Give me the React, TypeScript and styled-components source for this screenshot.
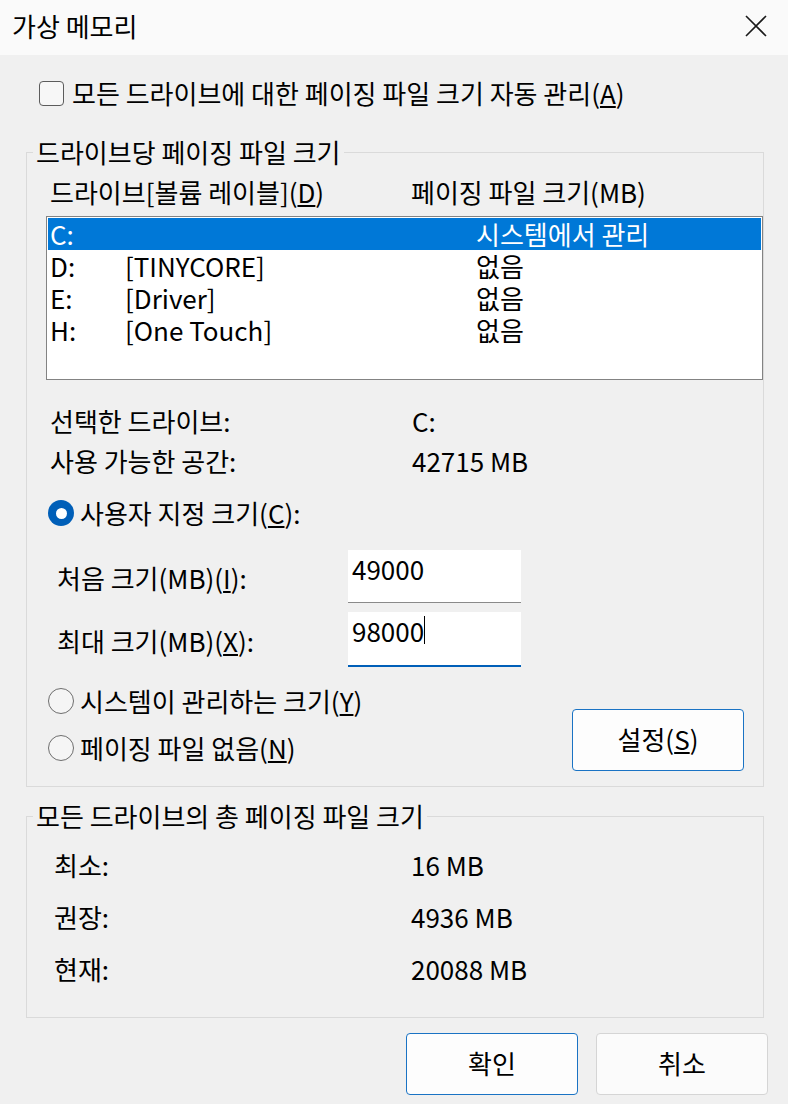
import React from 'react';
import styled, { createGlobalStyle } from 'styled-components';

const GlobalStyle = createGlobalStyle`
  *, *::before, *::after {
    box-sizing: border-box;
  }
  html, body {
    margin: 0;
    padding: 0;
    background: #f0f0f0;
  }
  body {
    font-family: "Noto Sans CJK KR", "Noto Sans", sans-serif;
    font-size: 26px;
    line-height: 30px;
    color: #000;
  }
`;

const Window = styled.div`
  width: 788px;
  height: 1104px;
  display: flex;
  flex-direction: column;
  background: #f0f0f0;
  overflow: hidden;
`;

const TitleBar = styled.header`
  height: 55px;
  flex: none;
  display: flex;
  align-items: center;
  justify-content: space-between;
  padding: 0 20px 3px 12px;
  background: #fafafa;
`;

const Title = styled.h1`
  margin: 0;
  font-size: 26px;
  font-weight: 400;
  line-height: 30px;
`;

const CloseButton = styled.button`
  width: 24px;
  height: 24px;
  padding: 0;
  border: none;
  background: transparent;
  display: flex;
  align-items: center;
  justify-content: center;
`;

const Body = styled.main`
  display: flex;
  flex-direction: column;
  padding: 0 24px 0 26px;
`;

const CheckRow = styled.label`
  display: flex;
  align-items: center;
  height: 26px;
  margin: 25px 0 0 13px;
  gap: 8px;
`;

const CheckBox = styled.span`
  width: 25px;
  height: 25px;
  border: 1.5px solid #5c5c5c;
  border-radius: 4px;
  background: #f7f7f7;
`;

const Group = styled.fieldset<{ $top: number; $bottom: number }>`
  margin: ${(p) => p.$top}px 0 0;
  padding: 0 0 ${(p) => p.$bottom}px;
  min-width: 0;
  border: 1px solid #dadada;
  display: flex;
  flex-direction: column;
`;

const Legend = styled.legend`
  margin-left: 6px;
  padding: 0 3px;
  line-height: 30px;
  background: #f0f0f0;
`;

const HeaderRow = styled.div`
  display: grid;
  grid-template-columns: 361px 1fr;
  height: 30px;
  margin: 10px 0 0 23px;
`;

const DriveList = styled.ul`
  list-style: none;
  margin: 9px 0 0 19px;
  padding: 1px 1px;
  height: 164px;
  background: #fff;
  border: 1px solid #838383;
`;

const DriveRow = styled.li<{ $selected?: boolean }>`
  display: grid;
  grid-template-columns: 75px 351px 1fr;
  height: 32px;
  align-items: center;
  padding-left: 2px;
  background: ${(p) => (p.$selected ? '#0078d7' : 'transparent')};
  color: ${(p) => (p.$selected ? '#fff' : '#000')};
`;

const InfoRow = styled.div<{ $first?: boolean }>`
  display: grid;
  grid-template-columns: 362px 1fr;
  height: 40px;
  align-items: center;
  margin: ${(p) => (p.$first ? '21px' : '0')} 0 0 23px;
`;

const RadioRow = styled.label<{ $top: number }>`
  display: flex;
  align-items: center;
  height: 26px;
  margin: ${(p) => p.$top}px 0 0 21px;
  gap: 6px;
`;

const Radio = styled.span<{ $checked?: boolean }>`
  width: 26px;
  height: 26px;
  flex: none;
  border-radius: 50%;
  display: flex;
  align-items: center;
  justify-content: center;
  background: ${(p) => (p.$checked ? '#005fb8' : '#f5f5f5')};
  border: ${(p) => (p.$checked ? 'none' : '1.5px solid #6e6e6e')};
  &::after {
    content: '';
    display: ${(p) => (p.$checked ? 'block' : 'none')};
    width: 11px;
    height: 11px;
    border-radius: 50%;
    background: #fff;
  }
`;

const SizeRow = styled.div<{ $top: number; $height: number }>`
  display: grid;
  grid-template-columns: 291px 173px;
  align-items: center;
  height: ${(p) => p.$height}px;
  margin: ${(p) => p.$top}px 0 0 30px;
`;

const SizeLabel = styled.span`
  padding-top: 2px;
`;

const TextInput = styled.div<{ $focused?: boolean }>`
  height: 100%;
  display: flex;
  align-items: flex-start;
  padding: 4px 0 0 4px;
  background: #fff;
  border-bottom: ${(p) => (p.$focused ? '2px solid #005fb8' : '1px solid #8a8a8a')};
`;

const Caret = styled.span`
  width: 1px;
  height: 28px;
  background: #000;
`;

const Lower = styled.div`
  display: flex;
  justify-content: space-between;
  align-items: flex-start;
  margin-top: 21px;
  padding-right: 19px;
`;

const RadioColumn = styled.div`
  display: flex;
  flex-direction: column;
`;

const PushButton = styled.button<{ $accent?: boolean; $top?: number }>`
  width: 172px;
  height: 62px;
  margin-top: ${(p) => p.$top ?? 0}px;
  border-radius: 4px;
  border: 1px solid ${(p) => (p.$accent ? '#1a73c4' : '#d5d5d5')};
  background: ${(p) => (p.$accent ? '#fdfdfd' : '#fbfbfb')};
  font: inherit;
  color: #000;
  padding: 0 0 2px;
`;

const TotalRow = styled.div<{ $first?: boolean }>`
  display: grid;
  grid-template-columns: 357px 1fr;
  height: 52px;
  align-items: center;
  margin: ${(p) => (p.$first ? '8px' : '0')} 0 0 27px;
`;

const Footer = styled.footer`
  display: flex;
  justify-content: flex-end;
  gap: 18px;
  margin: 15px -4px 0 0;
`;

const drives = [
  { letter: 'C:', label: '', size: '시스템에서 관리', selected: true },
  { letter: 'D:', label: '[TINYCORE]', size: '없음' },
  { letter: 'E:', label: '[Driver]', size: '없음' },
  { letter: 'H:', label: '[One Touch]', size: '없음' },
];

const totals = [
  { label: '최소:', value: '16 MB' },
  { label: '권장:', value: '4936 MB' },
  { label: '현재:', value: '20088 MB' },
];

export default function App() {
  return (
    <>
      <GlobalStyle />
      <Window>
        <TitleBar>
          <Title>가상 메모리</Title>
          <CloseButton aria-label="닫기">
            <svg width="22" height="22" viewBox="0 0 22 22">
              <path d="M1 1 L21 21 M21 1 L1 21" stroke="#1a1a1a" strokeWidth="1.6" fill="none" />
            </svg>
          </CloseButton>
        </TitleBar>
        <Body>
          <CheckRow>
            <CheckBox />
            <span>
              모든 드라이브에 대한 페이징 파일 크기 자동 관리(<u>A</u>)
            </span>
          </CheckRow>

          <Group $top={31} $bottom={15}>
            <Legend>드라이브당 페이징 파일 크기</Legend>
            <HeaderRow>
              <span>
                드라이브[볼륨 레이블](<u>D</u>)
              </span>
              <span>페이징 파일 크기(MB)</span>
            </HeaderRow>
            <DriveList>
              {drives.map((d) => (
                <DriveRow key={d.letter} $selected={d.selected}>
                  <span>{d.letter}</span>
                  <span>{d.label}</span>
                  <span>{d.size}</span>
                </DriveRow>
              ))}
            </DriveList>
            <InfoRow $first>
              <span>선택한 드라이브:</span>
              <span>C:</span>
            </InfoRow>
            <InfoRow>
              <span>사용 가능한 공간:</span>
              <span>42715 MB</span>
            </InfoRow>
            <RadioRow $top={19}>
              <Radio $checked />
              <span>
                사용자 지정 크기(<u>C</u>):
              </span>
            </RadioRow>
            <SizeRow $top={24} $height={53}>
              <SizeLabel>
                처음 크기(MB)(<u>I</u>):
              </SizeLabel>
              <TextInput>49000</TextInput>
            </SizeRow>
            <SizeRow $top={9} $height={55}>
              <SizeLabel>
                최대 크기(MB)(<u>X</u>):
              </SizeLabel>
              <TextInput $focused>
                98000
                <Caret />
              </TextInput>
            </SizeRow>
            <Lower>
              <RadioColumn>
                <RadioRow $top={0}>
                  <Radio />
                  <span>
                    시스템이 관리하는 크기(<u>Y</u>)
                  </span>
                </RadioRow>
                <RadioRow $top={21}>
                  <Radio />
                  <span>
                    페이징 파일 없음(<u>N</u>)
                  </span>
                </RadioRow>
              </RadioColumn>
              <PushButton $accent $top={21}>
                설정(<u>S</u>)
              </PushButton>
            </Lower>
          </Group>

          <Group $top={14} $bottom={22}>
            <Legend>모든 드라이브의 총 페이징 파일 크기</Legend>
            {totals.map((t, i) => (
              <TotalRow key={t.label} $first={i === 0}>
                <span>{t.label}</span>
                <span>{t.value}</span>
              </TotalRow>
            ))}
          </Group>

          <Footer>
            <PushButton $accent>확인</PushButton>
            <PushButton>취소</PushButton>
          </Footer>
        </Body>
      </Window>
    </>
  );
}
